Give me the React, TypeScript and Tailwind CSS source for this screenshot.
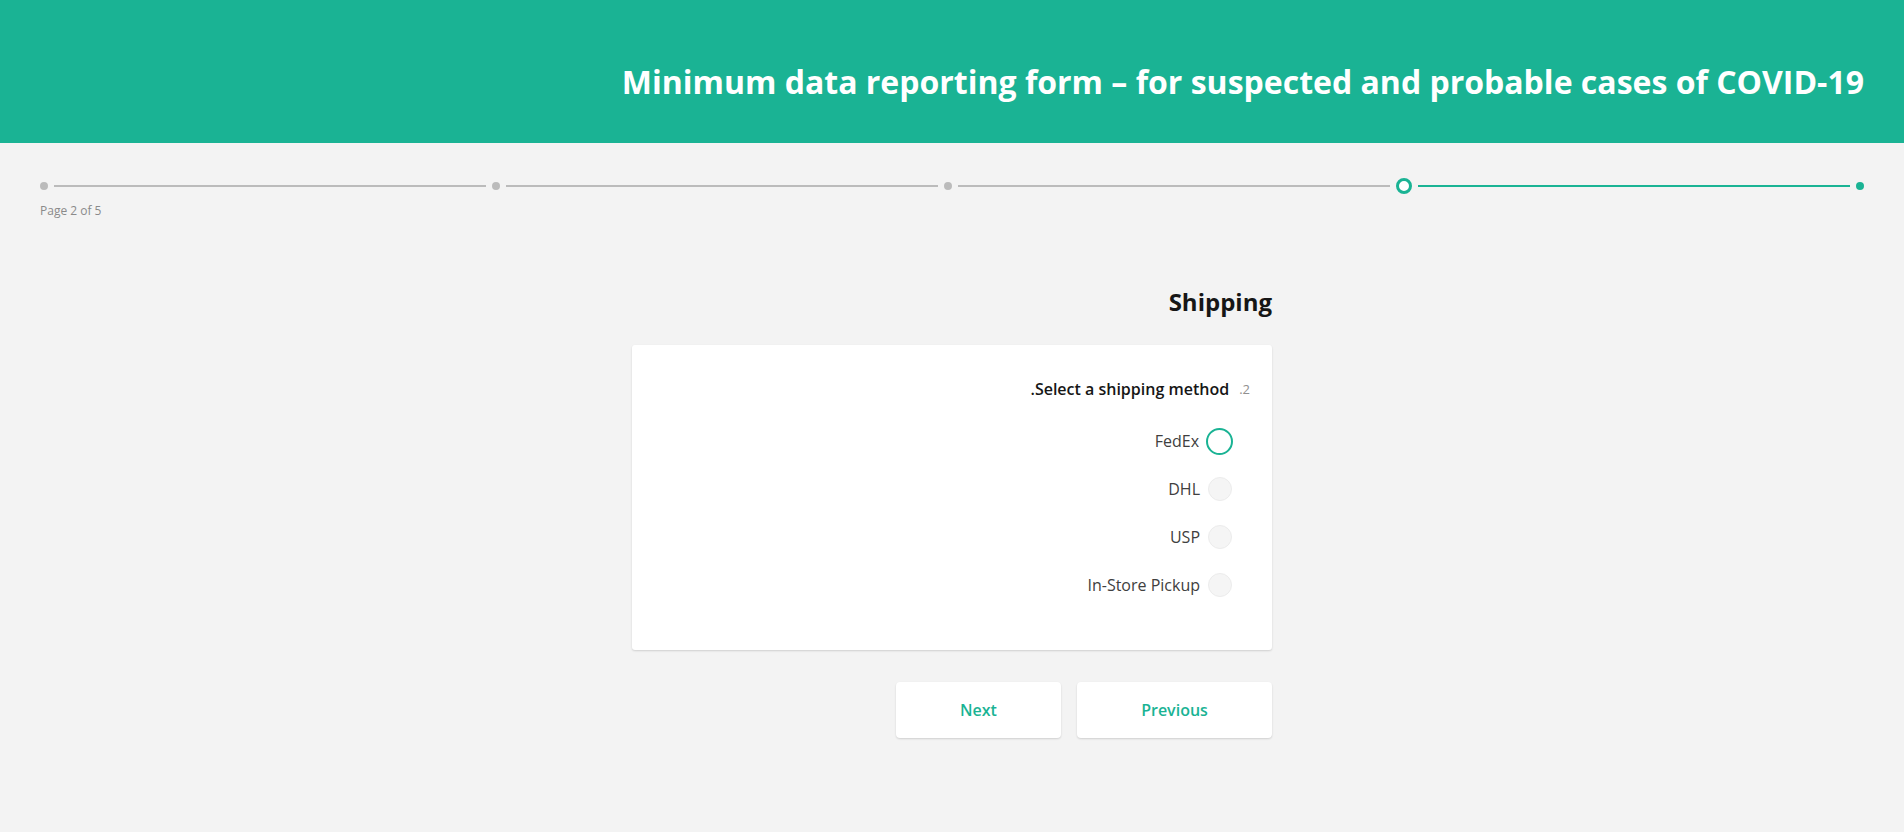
import { useState } from "react";

const options = ["FedEx", "DHL", "USP", "In-Store Pickup"];

const Dot = ({ active }: { active?: boolean }) => (
  <div
    className={`w-2 h-2 rounded-full shrink-0 ${active ? "bg-[#1ab394]" : "bg-[#bbbbbb]"}`}
  />
);

const Line = ({ active }: { active?: boolean }) => (
  <div
    className={`flex-1 h-[2px] mx-[6px] ${active ? "bg-[#1ab394]" : "bg-[#bbbbbb]"}`}
  />
);

const App = () => {
  const [selected, setSelected] = useState<string | null>(null);

  return (
    <div
      dir="rtl"
      className="min-h-screen bg-[#f3f3f3]"
      style={{ fontFamily: '"Open Sans", "Liberation Sans", sans-serif' }}
    >
      <div className="h-[143px] bg-[#1ab394] px-10 pt-[60px]">
        <h1 className="text-white text-[32px] font-bold leading-[44px]">
          Minimum data reporting form – for suspected and probable cases of COVID-19
        </h1>
      </div>

      {/* progress, page 1 sits on the right */}
      <div className="px-10 pt-[35px]">
        <div className="flex items-center h-4">
          <Dot active />
          <Line active />
          <div className="w-4 h-4 rounded-full border-[3px] border-[#1ab394] bg-white shrink-0" />
          <Line />
          <Dot />
          <Line />
          <Dot />
          <Line />
          <Dot />
        </div>
        <div dir="ltr" className="mt-[9px] text-[12px] leading-[16px] text-[#8a8a8a]">
          Page 2 of 5
        </div>
      </div>

      <div className="w-[640px] mx-auto mt-[67px]">
        <h2 className="text-[24px] font-bold leading-[32px] text-[#161616]">Shipping</h2>

        <div className="mt-[27px] bg-white rounded-[3px] shadow-[0_1px_2px_rgba(0,0,0,0.15)] pt-8 pb-[41px] pr-[22px]">
          <div className="flex items-center gap-[10px] leading-6">
            <span className="text-[13px] text-[#909090]">2.</span>
            <span className="text-[16px] font-semibold text-[#161616]">
              Select a shipping method.
            </span>
          </div>

          <div className="mt-4 pr-[18px]">
            {options.map((opt) => {
              const checked = selected === opt || (selected === null && opt === "FedEx");
              return (
                <label
                  key={opt}
                  onClick={() => setSelected(opt)}
                  className="flex items-center gap-2 h-12 cursor-pointer"
                >
                  {checked ? (
                    <span className="w-[27px] h-[27px] -mx-[1px] rounded-full border-2 border-[#1ab394] bg-white shrink-0" />
                  ) : (
                    <span className="w-6 h-6 rounded-full border border-[#ececec] bg-[#f5f5f5] shrink-0" />
                  )}
                  <span className="text-[16px] text-[#404040]">{opt}</span>
                </label>
              );
            })}
          </div>
        </div>

        <div className="flex gap-4 mt-[32px]">
          <button className="w-[195px] h-14 bg-white rounded-[4px] shadow-[0_1px_2px_rgba(0,0,0,0.15)] text-[#1ab394] text-[16px] font-semibold">
            Previous
          </button>
          <button className="w-[165px] h-14 bg-white rounded-[4px] shadow-[0_1px_2px_rgba(0,0,0,0.15)] text-[#1ab394] text-[16px] font-semibold">
            Next
          </button>
        </div>
      </div>
    </div>
  );
};

export default App;
